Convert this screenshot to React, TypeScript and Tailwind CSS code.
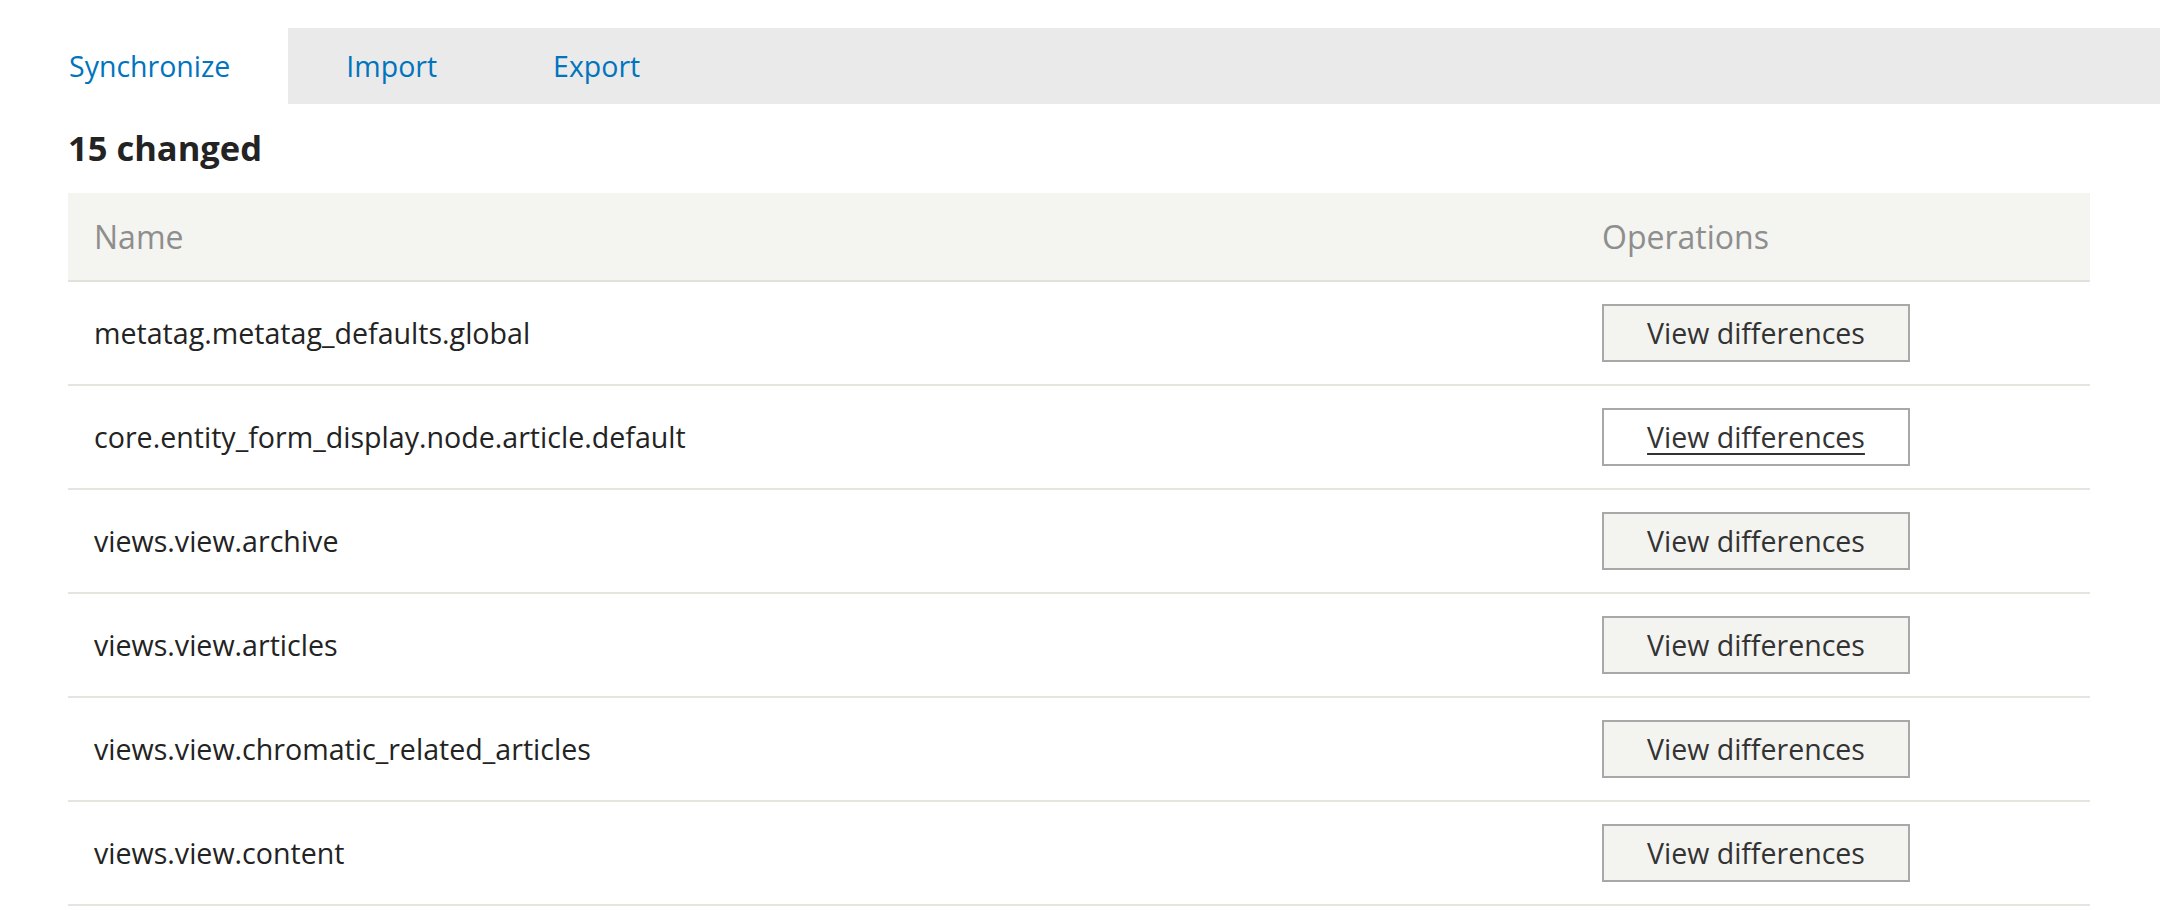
const tabs = [
  { name: "Synchronize", active: true },
  { name: "Import", active: false },
  { name: "Export", active: false },
];

const rows = [
  "metatag.metatag_defaults.global",
  "core.entity_form_display.node.article.default",
  "views.view.archive",
  "views.view.articles",
  "views.view.chromatic_related_articles",
  "views.view.content",
];

export default function App() {
  return (
    <div className="min-h-screen bg-white font-['Open_Sans',sans-serif] text-[#222330]">
      {/* tabs */}
      <div className="pt-[28px] pl-[11px]">
        <ul className="flex h-[76px] bg-[#eaeaea]">
          {tabs.map((tab) => (
            <li
              key={tab.name}
              className={`flex items-center px-[58px] text-[28.5px] text-[#0074bd] ${
                tab.active ? "bg-white" : ""
              }`}
            >
              {tab.name}
            </li>
          ))}
        </ul>
      </div>

      <div className="pl-[68px] pr-[70px]">
        <h2 className="mt-[24px] mb-[25px] text-[34.5px] font-bold leading-[40px] text-[#232323]">
          15 changed
        </h2>

        <div>
          <div className="grid h-[89px] grid-cols-[1fr_514px] items-center border-b-2 border-[#e2e2dc] bg-[#f4f4f0] text-[32px] text-[#8e8e8e]">
            <div className="pl-[26px]">Name</div>
            <div className="pl-[26px]">Operations</div>
          </div>

          {rows.map((name, i) => (
            <div
              key={name}
              className="grid h-[104px] grid-cols-[1fr_514px] items-center border-b-2 border-[#e6e4df]"
            >
              <div className="pl-[26px] text-[28.6px] text-[#232323]">{name}</div>
              <div className="pl-[26px]">
                <button
                  className={`h-[58px] w-[308px] border-2 border-[#a8a8a8] text-[28.5px] text-[#333] ${
                    i === 1 ? "bg-white underline underline-offset-[5px] text-[#222]" : "bg-[#f3f4ef]"
                  }`}
                >
                  View differences
                </button>
              </div>
            </div>
          ))}
        </div>
      </div>
    </div>
  );
}
